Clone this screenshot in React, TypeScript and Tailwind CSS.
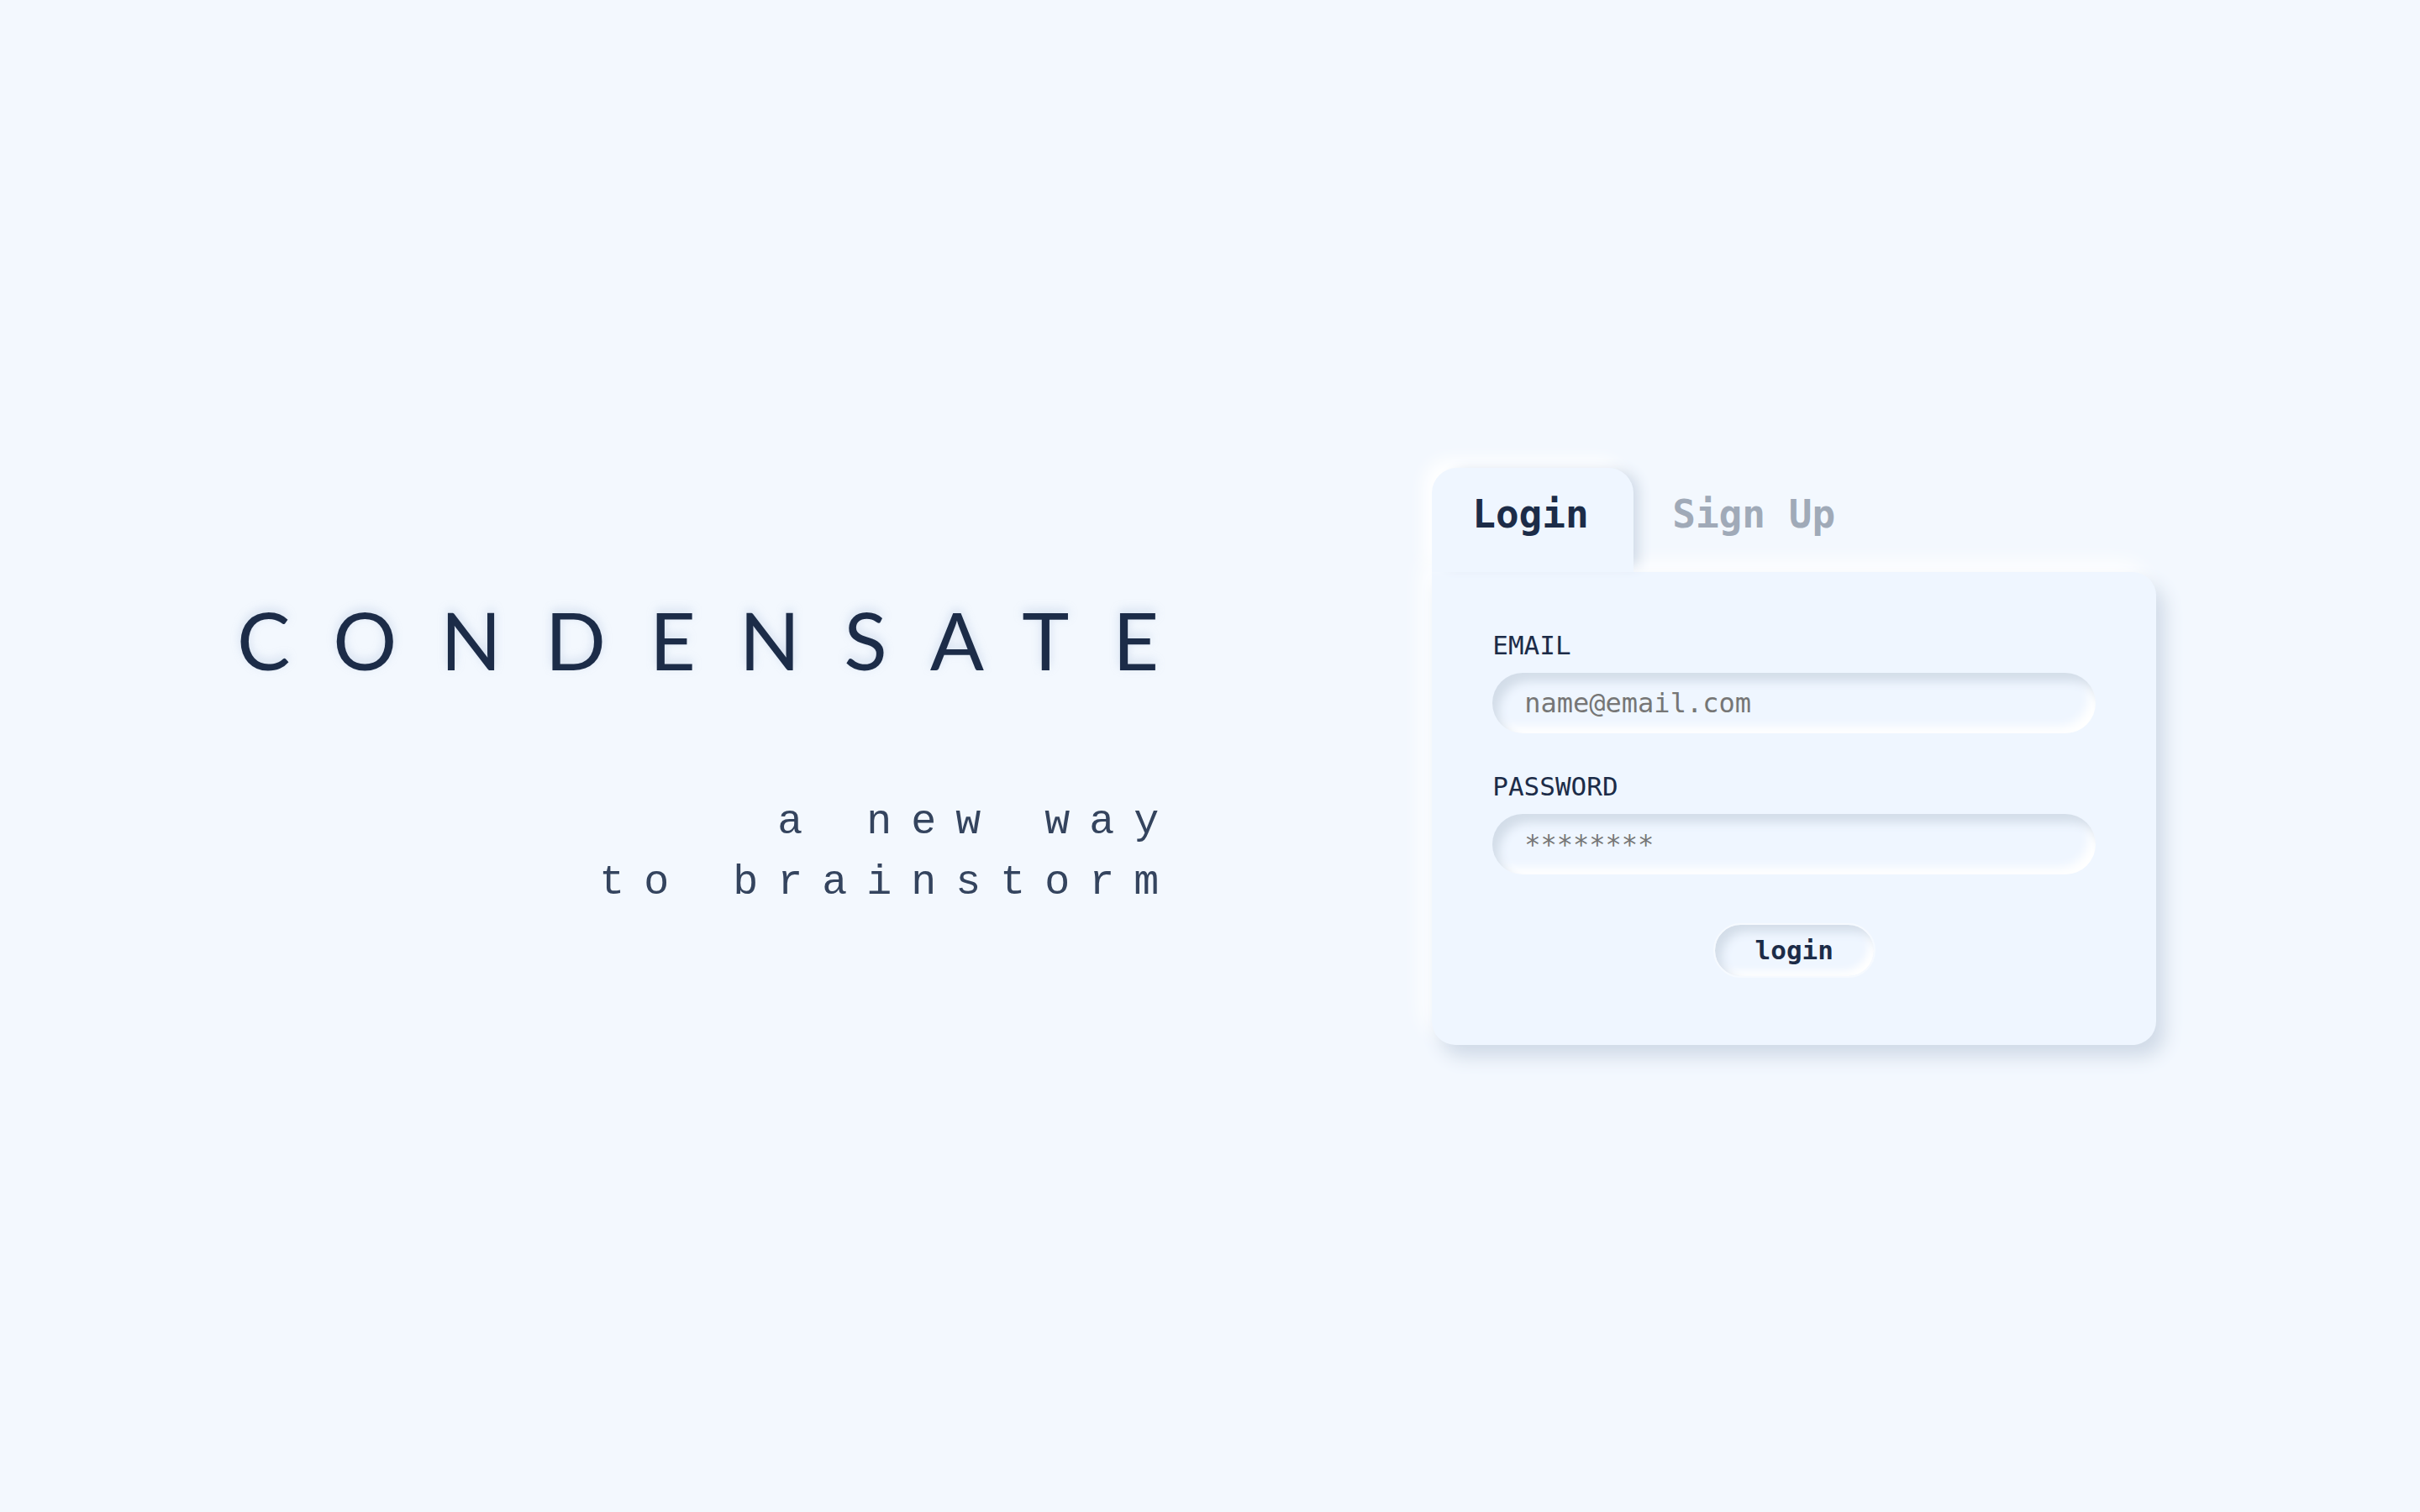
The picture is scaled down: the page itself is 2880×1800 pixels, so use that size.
export default function App() {
  return (
    <div className="flex h-[1800px] w-full items-center bg-[#f3f8fe] pl-[282px]">
      <div className="flex flex-col items-end">
        <h1 className="font-['Lato',sans-serif] text-[95px] font-normal leading-none tracking-[52px] text-[#1c2c48] [text-shadow:0_-4px_12px_rgba(150,172,206,0.35)]">
          CONDENSATE
        </h1>
        <div className="mt-[134px] mr-[29px] text-right font-['Liberation_Mono',monospace] text-[50px] font-light leading-[72px] tracking-[23px] text-[#34445e]">
          <p>a new way</p>
          <p>to brainstorm</p>
        </div>
      </div>

      <div className="ml-[273px] flex w-[862px] flex-col font-['DejaVu_Sans_Mono',monospace]">
        <div className="flex items-end">
          <div className="relative z-10 flex h-[124px] w-[240px] items-center rounded-t-[30px] bg-[#eff6ff] pb-[14px] pl-[48px] text-[46px] font-bold leading-none text-[#1c2c48] shadow-[12px_-2px_16px_-6px_#cfd9e6,-10px_-10px_20px_#ffffff]">
            Login
          </div>
          <div className="flex h-[124px] items-center pb-[14px] pl-[46px] text-[46px] font-bold leading-none text-[#a0aab8]">
            Sign Up
          </div>
        </div>

        <div className="flex flex-col rounded-[28px] rounded-tl-none bg-[#eff6ff] px-[72px] pt-[72px] pb-[80px] shadow-[10px_14px_22px_#d0dae7,-12px_-12px_24px_#ffffff]">
          <label className="text-[31px] leading-[30px] text-[#1c2c48]">EMAIL</label>
          <input
            type="text"
            placeholder="name@email.com"
            className="mt-[18px] h-[72px] w-full rounded-full bg-[#eff6ff] pl-[38px] text-[32px] text-[#1c2c48] outline-none shadow-[inset_8px_10px_12px_#d3dde9,inset_-8px_-8px_12px_#ffffff] placeholder:text-[#767676]"
          />

          <label className="mt-[48px] text-[31px] leading-[30px] text-[#1c2c48]">PASSWORD</label>
          <input
            type="password"
            placeholder="********"
            className="mt-[18px] h-[72px] w-full rounded-full bg-[#eff6ff] pl-[38px] text-[32px] text-[#1c2c48] outline-none shadow-[inset_8px_10px_12px_#d3dde9,inset_-8px_-8px_12px_#ffffff] placeholder:text-[#767676]"
          />

          <button className="mx-auto mt-[58px] h-[65px] w-[193px] rounded-full border-2 border-[#f6faff] bg-[#eff6ff] text-[31px] font-bold text-[#1c2c48] shadow-[inset_8px_8px_12px_#d3dde9,inset_-6px_-6px_10px_#ffffff]">
            login
          </button>
        </div>
      </div>
    </div>
  );
}
